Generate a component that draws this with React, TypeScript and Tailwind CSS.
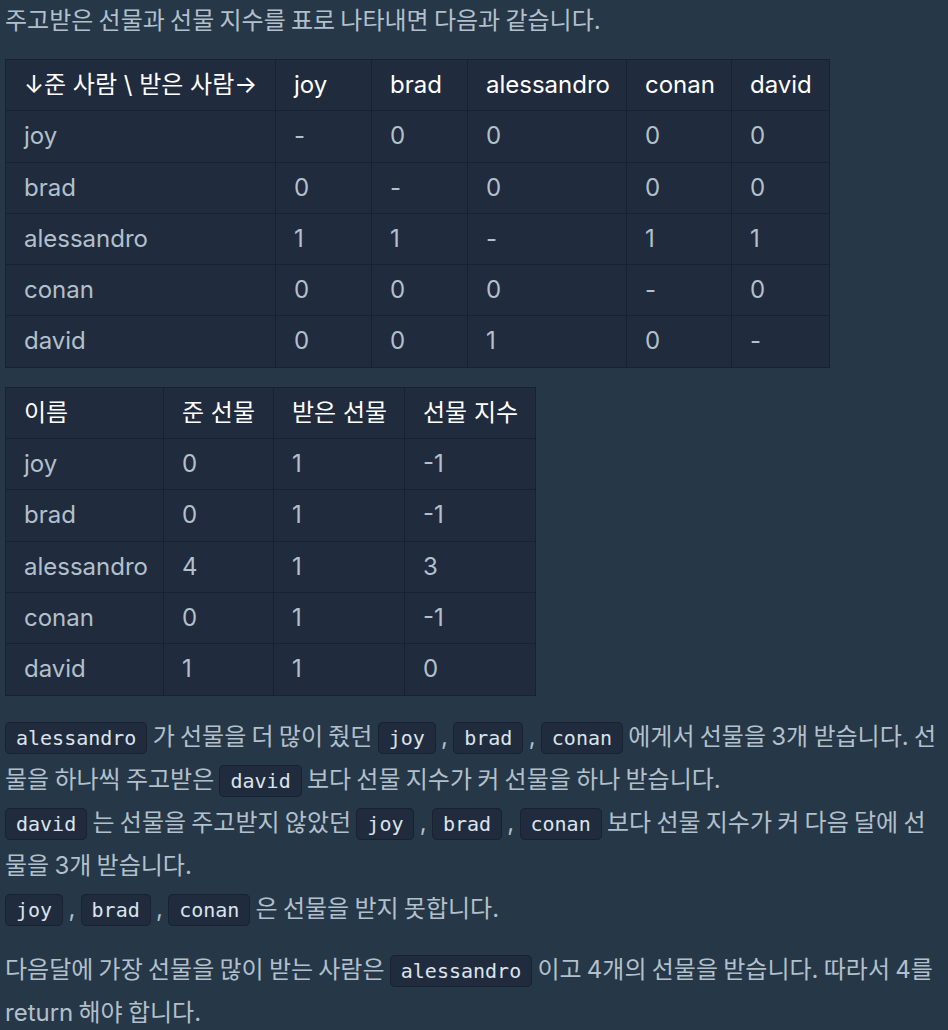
import type { ReactNode } from "react";

const GIVE = ["joy", "brad", "alessandro", "conan", "david"];

// 준 사람(행) -> 받은 사람(열)
const GIFT_TABLE = [
  ["joy", "-", "0", "0", "0", "0"],
  ["brad", "0", "-", "0", "0", "0"],
  ["alessandro", "1", "1", "-", "1", "1"],
  ["conan", "0", "0", "0", "-", "0"],
  ["david", "0", "0", "1", "0", "-"],
];

const INDEX_TABLE = [
  ["joy", "0", "1", "-1"],
  ["brad", "0", "1", "-1"],
  ["alessandro", "4", "1", "3"],
  ["conan", "0", "1", "-1"],
  ["david", "1", "1", "0"],
];

function Code({ children }: { children: ReactNode }) {
  return (
    <code className="rounded-[5px] border border-[#172130] bg-[#202b3d] px-[10px] py-[3px] font-['DejaVu_Sans_Mono',monospace] text-[20px] leading-[20px] text-[#dbe4ec] [word-spacing:0]">
      {children}
    </code>
  );
}

function Table({
  head,
  rows,
  widths,
  width,
}: {
  head: string[];
  rows: string[][];
  widths: string[];
  width: string;
}) {
  return (
    <table className={`table-fixed border-collapse bg-[#202b3d] ${width}`}>
      <thead>
        <tr>
          {head.map((h, i) => (
            <th
              key={h}
              className={`whitespace-nowrap border border-[#172130] px-[18px] py-[9px] text-left font-normal leading-[32.3px] text-white ${widths[i]}`}
            >
              {h}
            </th>
          ))}
        </tr>
      </thead>
      <tbody>
        {rows.map((row) => (
          <tr key={row[0]}>
            {row.map((cell, i) => (
              <td
                key={i}
                className="whitespace-nowrap border border-[#172130] px-[18px] py-[9px] leading-[32.3px] text-[#b2c0cc]"
              >
                {cell}
              </td>
            ))}
          </tr>
        ))}
      </tbody>
    </table>
  );
}

export default function App() {
  return (
    <div className="min-h-screen bg-[#263747] px-[5px] font-['Inter','Noto_Sans_CJK_KR',sans-serif] text-[24px] leading-[43px] text-[#b2c0cc]">
      <p className="mb-[17px] -mt-[1px] [word-spacing:-1.5px]">
        주고받은 선물과 선물 지수를 표로 나타내면 다음과 같습니다.
      </p>

      <div className="mb-[19px]">
        <Table
          width="w-[825px]"
          head={["↓준 사람 \\ 받은 사람→", ...GIVE]}
          rows={GIFT_TABLE}
          widths={["w-[270px]", "w-[96px]", "w-[96px]", "w-[159px]", "w-[105px]", "w-[98px]"]}
        />
      </div>

      <div className="mb-[19px]">
        <Table
          width="w-[531px]"
          head={["이름", "준 선물", "받은 선물", "선물 지수"]}
          rows={INDEX_TABLE}
          widths={["w-[158px]", "w-[110px]", "w-[131px]", "w-[131px]"]}
        />
      </div>

      <p className="mb-[18px] [word-spacing:-1.5px]">
        <Code>alessandro</Code> 가 선물을 더 많이 줬던 <Code>joy</Code> , <Code>brad</Code> ,{" "}
        <Code>conan</Code> 에게서 선물을 3개 받습니다. 선물을 하나씩 주고받은 <Code>david</Code> 보다
        선물 지수가 커 선물을 하나 받습니다.
        <br />
        <Code>david</Code> 는 선물을 주고받지 않았던 <Code>joy</Code> , <Code>brad</Code> ,{" "}
        <Code>conan</Code> 보다 선물 지수가 커 다음 달에 선물을 3개 받습니다.
        <br />
        <Code>joy</Code> , <Code>brad</Code> , <Code>conan</Code> 은 선물을 받지 못합니다.
      </p>

      <p className="[word-spacing:-1.5px]">
        다음달에 가장 선물을 많이 받는 사람은 <Code>alessandro</Code> 이고 4개의 선물을 받습니다. 따라서
        4를 return 해야 합니다.
      </p>
    </div>
  );
}
